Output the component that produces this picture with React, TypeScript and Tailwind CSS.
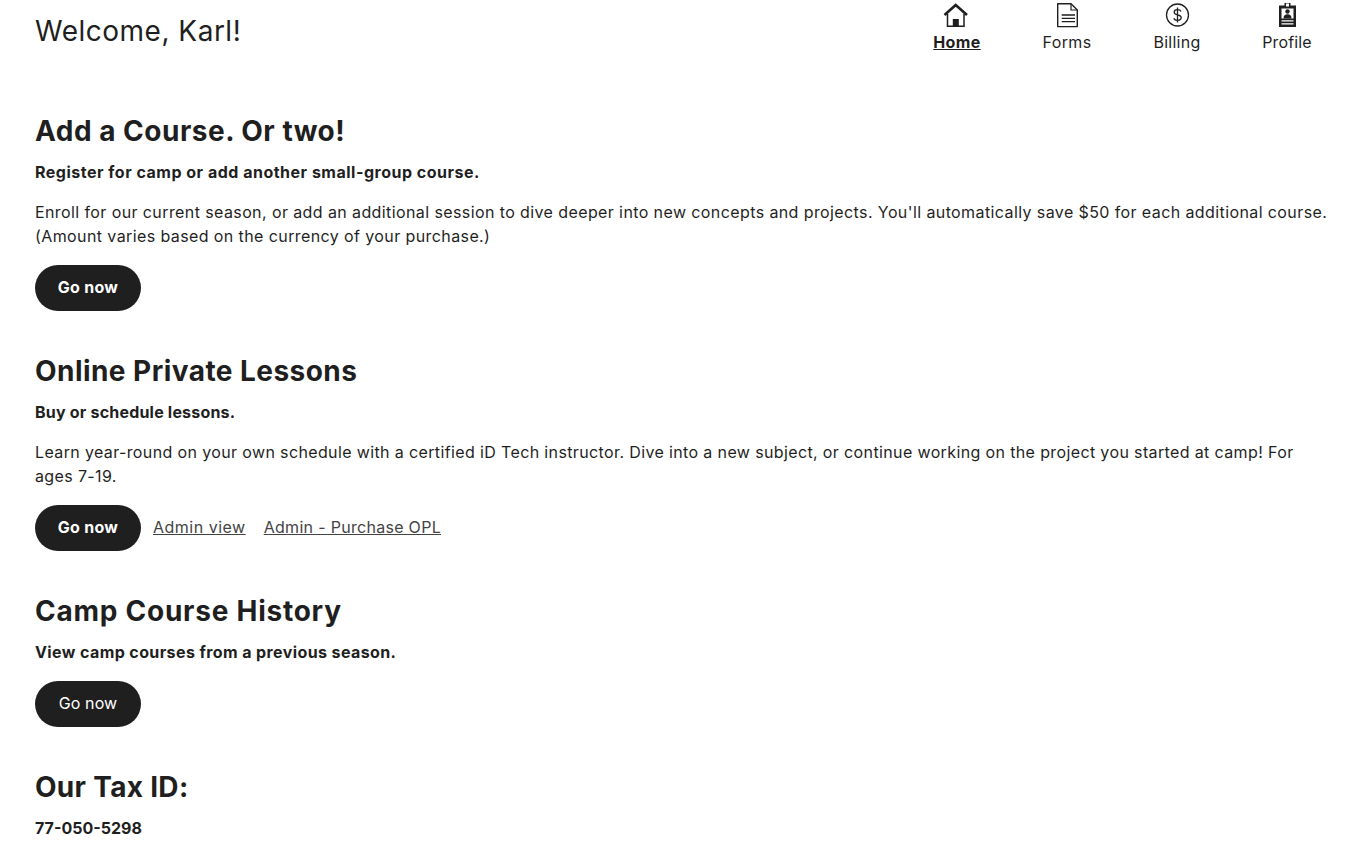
import type { ReactNode } from "react";

const HomeIcon = () => (
  <svg width="26" height="26" viewBox="0 0 26 26" fill="none" className="overflow-visible">
    <path d="M0.500 13 11.700 3l11.300 10" stroke="#1f1f1f" strokeWidth="2.600" />
    <path d="M3.500 12v12.300h16.500V12" stroke="#1f1f1f" strokeWidth="1.500" />
    <rect x="8.800" y="17" width="6" height="8" fill="#1f1f1f" />
  </svg>
);

const FormsIcon = () => (
  <svg width="26" height="26" viewBox="0 0 26 26" fill="none" stroke="#1f1f1f">
    <path d="M3.700 1.700h13.300l6.300 6.300v16.600H3.700z" strokeWidth="1.400" strokeLinejoin="round" />
    <path d="M17 1.700V8h6.300" strokeWidth="1.200" />
    <path d="M7.700 13h13.300M7.700 16.300h13.300M7.700 19.700h13.300" strokeWidth="1.300" />
  </svg>
);

const BillingIcon = () => (
  <svg width="26" height="26" viewBox="0 0 26 26" fill="none" stroke="#1f1f1f">
    <circle cx="13.500" cy="13" r="11" strokeWidth="1.300" />
    <path d="M17 9.500c-.5-1.300-1.800-1.800-3.500-1.800-2 0-3.300 1-3.300 2.600 0 3.500 7 1.800 7 5.300 0 1.700-1.500 2.700-3.700 2.700-1.900 0-3.200-.7-3.700-2.100M13.500 5.500v15" strokeWidth="1.300" />
  </svg>
);

const ProfileIcon = () => (
  <svg width="26" height="26" viewBox="0 0 26 26" fill="none">
    <path d="M5 3.500h5.500V1h6v2.500H22V25H5z" fill="#1f1f1f" />
    <rect x="12" y="1.500" width="3" height="3" fill="#fff" />
    <rect x="7.500" y="6.500" width="12" height="10" fill="#fff" />
    <circle cx="13.500" cy="9.500" r="2.200" fill="#1f1f1f" />
    <path d="M9.500 16.500c0-3 1.500-4.300 4-4.300s4 1.300 4 4.300z" fill="#1f1f1f" />
    <path d="M7.500 18.800h12M7.500 21.800h12" stroke="#fff" strokeWidth="1.200" />
  </svg>
);

const navItems = [
  { label: "Home", icon: HomeIcon, className: "font-bold underline tracking-[0.4px]" },
  { label: "Forms", icon: FormsIcon, className: "font-normal tracking-[0.4px]" },
  { label: "Billing", icon: BillingIcon, className: "font-normal tracking-[0.25px]" },
  { label: "Profile", icon: ProfileIcon, className: "font-normal tracking-[0.15px]" },
];

function GoNow({ bold = true }: { bold?: boolean }) {
  return (
    <button
      className={`w-[106px] h-[46px] pb-[2px] rounded-full bg-[#1f1f1f] text-white text-[16px] ${
        bold ? "font-bold tracking-[0.3px]" : "font-normal tracking-[0.1px]"
      }`}
    >
      Go now
    </button>
  );
}

function Section({
  title,
  lead,
  titleClass,
  leadClass,
  children,
}: {
  title: string;
  lead: string;
  titleClass: string;
  leadClass: string;
  children?: ReactNode;
}) {
  return (
    <section className="mb-[39px]">
      <h2 className={`h-[42px] leading-[42px] text-[28px] font-bold ${titleClass}`}>{title}</h2>
      <p className={`mt-2 leading-6 font-bold text-[16px] ${leadClass}`}>{lead}</p>
      {children}
    </section>
  );
}

export default function App() {
  return (
    <div
      className="min-h-screen bg-white text-[#1f1f1f] overflow-hidden"
      style={{ fontFamily: "Inter, 'Noto Sans', sans-serif" }}
    >
      {/* Header */}
      <header className="flex justify-between h-[110px] pl-[35px] pr-[9px]">
        <h1 className="mt-[10px] h-[42px] leading-[42px] text-[28px] font-normal tracking-[0.5px]">
          Welcome, Karl!
        </h1>
        <nav className="flex">
          {navItems.map((item) => (
            <a key={item.label} className="w-[110px] flex flex-col items-center pt-[2px]">
              <item.icon />
              <span className={`mt-[2px] leading-6 text-[16px] ${item.className}`}>{item.label}</span>
            </a>
          ))}
        </nav>
      </header>

      <main className="pl-[35px] pr-[20px]">
        <Section
          title="Add a Course. Or two!"
          lead="Register for camp or add another small-group course."
          titleClass="tracking-[0.5px]"
          leadClass="tracking-[0.5px]"
        >
          <p className="mt-4 leading-6 text-[16px] tracking-[0.4px]">
            Enroll for our current season, or add an additional session to dive deeper into new concepts and
            projects. You'll automatically save $50 for each additional course. (Amount varies based on the
            currency of your purchase.)
          </p>
          <div className="mt-[17px]">
            <GoNow />
          </div>
        </Section>

        <Section
          title="Online Private Lessons"
          lead="Buy or schedule lessons."
          titleClass="tracking-[0.45px]"
          leadClass="tracking-[0.2px]"
        >
          <p className="mt-4 leading-6 text-[16px] tracking-[0.37px]">
            Learn year-round on your own schedule with a certified iD Tech instructor. Dive into a new subject, or
            continue working on the project you started at camp! For ages 7-19.
          </p>
          <div className="mt-[17px] flex items-center">
            <GoNow />
            <a className="ml-3 pb-[2px] underline text-[#444] text-[16px] tracking-[0.5px]">Admin view</a>
            <a className="ml-[18px] pb-[2px] underline text-[#444] text-[16px] tracking-[0.3px]">
              Admin - Purchase OPL
            </a>
          </div>
        </Section>

        <Section
          title="Camp Course History"
          lead="View camp courses from a previous season."
          titleClass="tracking-[0.75px]"
          leadClass="tracking-[0.4px]"
        >
          <div className="mt-[17px]">
            <GoNow bold={false} />
          </div>
        </Section>

        <Section
          title="Our Tax ID:"
          lead="77-050-5298"
          titleClass="tracking-[0.3px]"
          leadClass="tracking-normal"
        />
      </main>
    </div>
  );
}
